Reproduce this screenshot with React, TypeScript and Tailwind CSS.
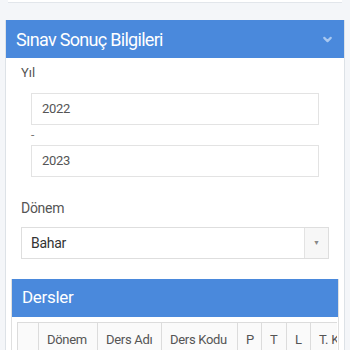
import { ChevronDown } from 'lucide-react';

const columns = [
  { label: '', w: 'w-[21px]' },
  { label: 'Dönem', w: 'w-[59px]' },
  { label: 'Ders Adı', w: 'w-[64px]' },
  { label: 'Ders Kodu', w: 'w-[76px]' },
  { label: 'P', w: 'w-[24px]' },
  { label: 'T', w: 'w-[25px]' },
  { label: 'L', w: 'w-[24px]' },
  { label: 'T. Kredi', w: 'w-[60px]' },
  { label: 'AKTS', w: 'w-[50px]' },
];

export default function App() {
  return (
    <div className="h-[350px] w-[350px] overflow-hidden bg-[#f4f6f9] font-['Roboto',sans-serif]">
      <div className="mx-[8px] h-[3px] bg-white border-b border-[#e2e6eb]" />

      <div className="mx-[5px] mt-[17px] bg-white border border-[#dde2e7] border-t-0">
        <div className="flex h-[38px] items-center justify-between bg-[#4a89dc] pl-[10px] pr-[10px]">
          <h2 className="text-[18px] tracking-[-0.7px] text-white">Sınav Sonuç Bilgileri</h2>
          <ChevronDown className="h-[13px] w-[13px] text-[#a9c8f0]" strokeWidth={4} />
        </div>

        <div className="px-[15px]">
          <div className="pt-[5px] text-[13px] leading-[20px] text-[#555]">Yıl</div>
          <div className="mx-[10px] mt-[10px] flex h-[32px] items-center border border-[#e3e3e3] px-[10px] text-[13px] tracking-[-0.3px] text-[#555]">
            2022
          </div>
          <div className="ml-[10px] h-[20px] text-[12px] leading-[20px] text-[#777]">-</div>
          <div className="mx-[10px] flex h-[32px] items-center border border-[#e3e3e3] px-[10px] text-[13px] tracking-[-0.3px] text-[#555]">
            2023
          </div>

          <div className="mt-[21px] text-[14px] leading-[20px] tracking-[-0.3px] text-[#555]">Dönem</div>
          <div className="mt-[9px] flex h-[32px] border border-[#dedede]">
            <div className="flex flex-1 items-center px-[9px] text-[14px] tracking-[-0.3px] text-[#333]">Bahar</div>
            <div className="flex w-[24px] items-center justify-center border-l border-[#e3e3e3] bg-[#f7f7f7]">
              <span className="text-[7px] text-[#888]">▼</span>
            </div>
          </div>

          <div className="-mx-[10px] mt-[20px] border border-[#e0e0e0] border-t-0">
            <div className="flex h-[38px] items-center bg-[#4a89dc] px-[10px]">
              <h3 className="text-[17px] tracking-[-0.3px] text-white">Dersler</h3>
            </div>
            <div className="pl-[5px] pr-[1px] pt-[5px]">
              <div className="overflow-hidden">
                <table className="w-[400px] table-fixed border-collapse text-[13px] tracking-[-0.3px] text-[#555]">
                  <thead>
                    <tr>
                      {columns.map((c, i) => (
                        <th
                          key={i}
                          className={`${c.w} h-[34px] whitespace-nowrap border border-[#dcdcdc] bg-[#fafafa] px-[8px] text-left font-normal`}
                        >
                          {c.label}
                        </th>
                      ))}
                    </tr>
                  </thead>
                </table>
              </div>
            </div>
          </div>
        </div>
      </div>
    </div>
  );
}
